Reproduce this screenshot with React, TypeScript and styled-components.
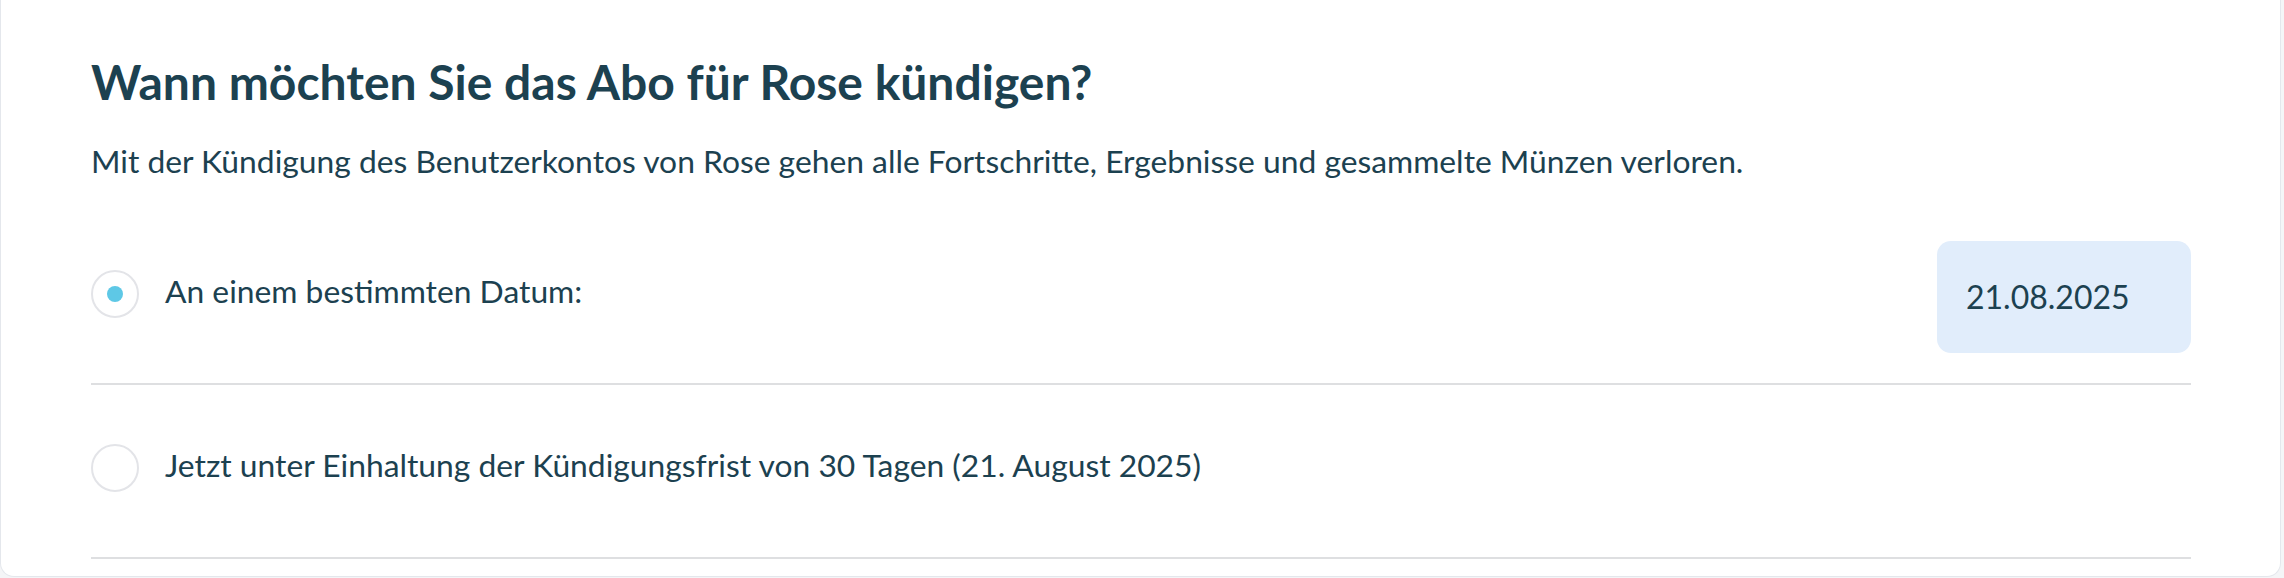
import React, { useState } from 'react'
import styled, { createGlobalStyle } from 'styled-components'

const GlobalStyle = createGlobalStyle`
  html, body {
    margin: 0;
    padding: 0;
    background: #f4f5f7;
  }
  body {
    font-family: Lato, "Noto Sans", sans-serif;
    color: #1c4150;
  }
`

const StyledCard = styled.section`
  box-sizing: border-box;
  width: 2281px;
  height: 577px;
  background: #ffffff;
  border: 1.5px solid #e4e7ec;
  border-top: none;
  border-radius: 0 0 14px 14px;
  padding: 53px 89px 0 90px;
  overflow: hidden;
`

const StyledTitle = styled.h1`
  margin: 0;
  font-size: 48px;
  line-height: 1.2;
  font-weight: 700;
  color: #1c4150;
`

const StyledIntro = styled.p`
  margin: 31px 0 31px;
  font-size: 31.8px;
  line-height: 1.2;
  font-weight: 400;
`

const StyledOptions = styled.div`
  display: flex;
  flex-direction: column;
`

const StyledOption = styled.label`
  display: flex;
  align-items: center;
  gap: 26px;
  min-height: 112px;
  padding: 30px 0;
  border-bottom: 2px solid #dedfe1;
  cursor: pointer;
`

const StyledRadio = styled.span<{ checked: boolean }>`
  box-sizing: border-box;
  flex: none;
  display: flex;
  align-items: center;
  justify-content: center;
  width: 48px;
  height: 48px;
  margin-top: -6px;
  border-radius: 50%;
  border: 2px solid #e3e4e8;
  background: #fff;

  &::after {
    content: '';
    width: 16px;
    height: 16px;
    border-radius: 50%;
    background: #5ec8e6;
    opacity: ${({ checked }) => (checked ? 1 : 0)};
  }
`

const StyledLabel = styled.span`
  flex: 1;
  font-size: 31.8px;
  line-height: 1.2;
  margin-top: -12px;
`

const StyledDate = styled.div`
  box-sizing: border-box;
  flex: none;
  display: flex;
  align-items: center;
  width: 254px;
  height: 112px;
  padding: 0 29px;
  border-radius: 14px;
  background: #e1edfb;
  font-size: 32px;
  color: #1c4150;
`

interface Option {
  id: string
  label: string
  date?: string
}

const options: Option[] = [
  { id: 'date', label: 'An einem bestimmten Datum:', date: '21.08.2025' },
  { id: 'notice', label: 'Jetzt unter Einhaltung der Kündigungsfrist von 30 Tagen (21. August 2025)' },
]

const App: React.FC = () => {
  const [selected, setSelected] = useState('date')

  return (
    <>
      <GlobalStyle />
      <StyledCard>
        <StyledTitle>Wann möchten Sie das Abo für Rose kündigen?</StyledTitle>
        <StyledIntro>
          Mit der Kündigung des Benutzerkontos von Rose gehen alle Fortschritte, Ergebnisse und gesammelte Münzen verloren.
        </StyledIntro>
        <StyledOptions role="radiogroup">
          {options.map((option) => (
            <StyledOption key={option.id} onClick={() => setSelected(option.id)}>
              <StyledRadio checked={selected === option.id} role="radio" aria-checked={selected === option.id} />
              <StyledLabel>{option.label}</StyledLabel>
              {option.date && <StyledDate>{option.date}</StyledDate>}
            </StyledOption>
          ))}
        </StyledOptions>
      </StyledCard>
    </>
  )
}

export default App
